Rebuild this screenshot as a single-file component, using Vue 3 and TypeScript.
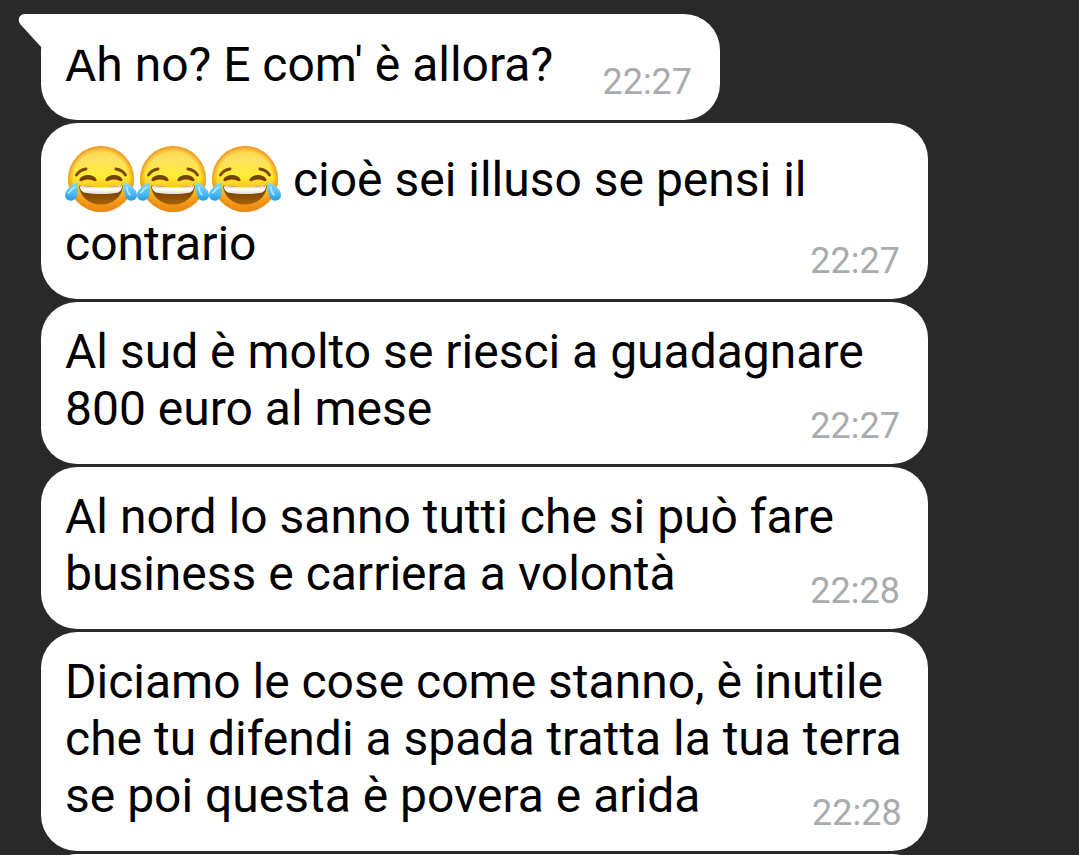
<script setup lang="ts">
interface Message {
  id: number
  laughs?: number
  lines: string[]
  time: string
}

const messages: Message[] = [
  { id: 1, lines: ["Ah no? E com' è allora?"], time: '22:27' },
  { id: 2, laughs: 3, lines: [' cioè sei illuso se pensi il', 'contrario'], time: '22:27' },
  { id: 3, lines: ['Al sud è molto se riesci a guadagnare', '800 euro al mese'], time: '22:27' },
  { id: 4, lines: ['Al nord lo sanno tutti che si può fare', 'business e carriera a volontà'], time: '22:28' },
  {
    id: 5,
    lines: ['Diciamo le cose come stanno, è inutile', 'che tu difendi a spada tratta la tua terra', 'se poi questa è povera e arida'],
    time: '22:28',
  },
]
</script>

<template>
  <main class="chat">
    <svg class="defs" width="0" height="0" aria-hidden="true">
      <defs>
        <linearGradient id="face" x1="0" y1="0" x2="0" y2="1">
          <stop offset="0" stop-color="#fbcf45" />
          <stop offset="0.2" stop-color="#fde161" />
          <stop offset="0.46" stop-color="#ffec32" />
          <stop offset="0.68" stop-color="#fbb81f" />
          <stop offset="1" stop-color="#ec8010" />
        </linearGradient>
        <radialGradient id="rim" cx="0.5" cy="0.5" r="0.5">
          <stop offset="0.82" stop-color="#f0930f" stop-opacity="0" />
          <stop offset="1" stop-color="#e58a1d" stop-opacity="0.85" />
        </radialGradient>
        <linearGradient id="mouth" x1="0" y1="0" x2="0" y2="1">
          <stop offset="0" stop-color="#6b3503" />
          <stop offset="1" stop-color="#a56206" />
        </linearGradient>
        <linearGradient id="teeth" x1="0" y1="0" x2="0" y2="1">
          <stop offset="0" stop-color="#cfc6be" />
          <stop offset="0.45" stop-color="#ffffff" />
          <stop offset="1" stop-color="#e4dbd4" />
        </linearGradient>
        <linearGradient id="tear" x1="0" y1="0" x2="0" y2="1">
          <stop offset="0" stop-color="#8ed8fb" />
          <stop offset="0.6" stop-color="#4dbcf4" />
          <stop offset="1" stop-color="#1f9be6" />
        </linearGradient>
        <symbol id="laugh" viewBox="0 -3 72 71" overflow="visible">
          <circle cx="36" cy="32" r="33" fill="url(#face)" />
          <circle cx="36" cy="32" r="33" fill="url(#rim)" />
          <g fill="none" stroke="#80490a" stroke-linecap="round" stroke-width="3">
            <path d="M11.500 28 Q14.500 23 21 22" />
            <path d="M51 22 Q57.500 23 60.500 28" />
          </g>
          <path d="M14.500 32.500 C17 26.500 29 26.500 31.500 32.500 C32 34.500 30 34.500 28 33.500 C25 32.300 21 32.300 18 33.500 C16 34.500 14 34.500 14.500 32.500Z" fill="#754006" />
          <path d="M40.500 32.500 C43 26.500 55 26.500 57.500 32.500 C58 34.500 56 34.500 54 33.500 C51 32.300 47 32.300 44 33.500 C42 34.500 40 34.500 40.500 32.500Z" fill="#754006" />
          <path d="M14 38.500 C28 40.500 44 40.500 58 38.500 C57 50 48 57.500 36 57.500 C24 57.500 15 50 14 38.500Z" fill="url(#mouth)" />
          <path d="M14.500 38.500 C28 40.500 44 40.500 57.500 38.500 C57 42 55.500 45 52 45.800 C43 47.500 29 47.500 20 45.800 C16.500 45 15 42 14.500 38.500Z" fill="url(#teeth)" />
          <path d="M12.500 35 C6 38 0 43 0 48 C0 51.500 2.500 53.700 6 53.700 C12 53.700 14 45 12.500 35Z" fill="url(#tear)" />
          <path d="M59.500 35 C66 38 72 43 72 48 C72 51.500 69.500 53.700 66 53.700 C60 53.700 58 45 59.500 35Z" fill="url(#tear)" />
          <path d="M3.500 46 Q6 42.500 10 40" fill="none" stroke="#b9e9fd" stroke-width="1.500" stroke-linecap="round" />
          <path d="M62 40 Q62 45 65 48" fill="none" stroke="#b9e9fd" stroke-width="1.500" stroke-linecap="round" />
        </symbol>
      </defs>
    </svg>

    <article
      v-for="(message, index) in messages"
      :key="message.id"
      class="bubble"
      :class="{ full: message.lines.length > 1 }"
    >
      <svg v-if="index === 0" class="tail" viewBox="0 0 64 36" aria-hidden="true">
        <path d="M64 0 H5 C-1 0 -3 6 0.500 10.500 L22 34 L64 36Z" fill="#fff" />
      </svg>
      <p class="text">
        <svg v-for="n in message.laughs ?? 0" :key="n" class="emoji" role="img" aria-label="Risata con lacrime">
          <use href="#laugh" />
        </svg><template v-for="(line, i) in message.lines" :key="i"><br v-if="i > 0" />{{ line }}</template><span class="reserve"></span>
      </p>
      <time class="time">{{ message.time }}</time>
    </article>
    <article class="bubble full next"></article>
  </main>
</template>

<style>
html,
body {
  margin: 0;
  background: #292929;
}
</style>

<style scoped>
.chat {
  box-sizing: border-box;
  height: 100vh;
  overflow: hidden;
  padding: 14px 151px 0 41px;
  display: flex;
  flex-direction: column;
  align-items: flex-start;
  gap: 3px;
  background: #292929;
  font-family: Roboto, sans-serif;
}

.defs {
  position: absolute;
}

.bubble {
  position: relative;
  flex: none;
  display: grid;
  align-content: end;
  box-sizing: border-box;
  min-height: 106px;
  max-width: 100%;
  padding: 21px 28px 27px 24px;
  border-radius: 36px;
  background: #fff;
}

.full {
  width: 100%;
}

.tail {
  position: absolute;
  top: 0;
  left: -21px;
  width: 64px;
  height: 36px;
  overflow: visible;
}

.text {
  grid-area: 1 / 1;
  margin: 0;
  color: #000;
  font-size: 48px;
  line-height: 57px;
  white-space: nowrap;
}

.emoji {
  display: inline-block;
  width: 72px;
  height: 71px;
  overflow: visible;
  vertical-align: -19px;
}

.reserve {
  display: inline-block;
  width: 139px;
}

.time {
  grid-area: 1 / 1;
  place-self: end;
  margin-bottom: -10px;
  color: #a9abad;
  font-size: 36px;
  line-height: 42px;
}

.next {
  height: 162px;
}
</style>
